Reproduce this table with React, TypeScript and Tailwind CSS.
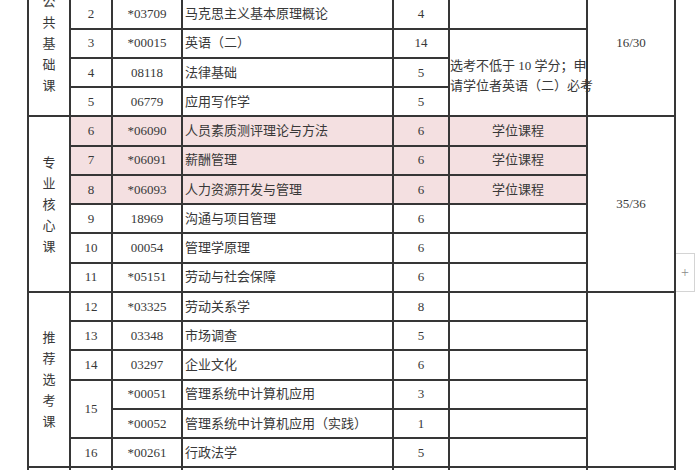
import React from 'react';

type Row = {
  seq?: string;
  seqSpan?: number;
  code: string;
  name: string;
  credit: string;
  note?: React.ReactNode;
  noteSpan?: number;
  skipNote?: boolean;
  skipSeq?: boolean;
  pink?: boolean;
  cat?: string;
  catSpan?: number;
  total?: string;
  totalSpan?: number;
};

// first row sits above the visible area, like a scrolled page
const rows: Row[] = [
  { seq: '', code: '', name: '', credit: '', note: '', cat: '公共基础课', catSpan: 5, total: '16/30', totalSpan: 5 },
  { seq: '2', code: '*03709', name: '马克思主义基本原理概论', credit: '4', note: '' },
  {
    seq: '3',
    code: '*00015',
    name: '英语（二）',
    credit: '14',
    note: (
      <div className="leading-[20px] pt-[8px]">
        选考不低于 10 学分；申
        <br />
        请学位者英语（二）必考
      </div>
    ),
    noteSpan: 3,
  },
  { seq: '4', code: '08118', name: '法律基础', credit: '5', skipNote: true },
  { seq: '5', code: '06779', name: '应用写作学', credit: '5', skipNote: true },
  { seq: '6', code: '*06090', name: '人员素质测评理论与方法', credit: '6', note: '学位课程', pink: true, cat: '专业核心课', catSpan: 6, total: '35/36', totalSpan: 6 },
  { seq: '7', code: '*06091', name: '薪酬管理', credit: '6', note: '学位课程', pink: true },
  { seq: '8', code: '*06093', name: '人力资源开发与管理', credit: '6', note: '学位课程', pink: true },
  { seq: '9', code: '18969', name: '沟通与项目管理', credit: '6', note: '' },
  { seq: '10', code: '00054', name: '管理学原理', credit: '6', note: '' },
  { seq: '11', code: '*05151', name: '劳动与社会保障', credit: '6', note: '' },
  { seq: '12', code: '*03325', name: '劳动关系学', credit: '8', note: '', cat: '推荐选考课', catSpan: 6, total: '', totalSpan: 6 },
  { seq: '13', code: '03348', name: '市场调查', credit: '5', note: '' },
  { seq: '14', code: '03297', name: '企业文化', credit: '6', note: '' },
  { seq: '15', seqSpan: 2, code: '*00051', name: '管理系统中计算机应用', credit: '3', note: '' },
  { skipSeq: true, code: '*00052', name: '管理系统中计算机应用（实践）', credit: '1', note: '' },
  { seq: '16', code: '*00261', name: '行政法学', credit: '5', note: '' },
  { seq: '', code: '', name: '', credit: '', note: '', cat: '', catSpan: 1, total: '', totalSpan: 1 },
];

const cell = 'border-2 border-[#363636] p-0';

const App: React.FC = () => {
  return (
    <div
      className="relative w-[700px] h-[470px] overflow-hidden bg-white text-[13px] text-[#383838]"
      style={{ fontFamily: '"Liberation Serif", "Noto Sans CJK SC", serif' }}
    >
      <div className="pl-[27px] -mt-[31px]">
        <table className="w-[647px] table-fixed border-collapse">
          <colgroup>
            <col className="w-[42px]" />
            <col className="w-[42px]" />
            <col className="w-[70px]" />
            <col className="w-[211px]" />
            <col className="w-[56px]" />
            <col className="w-[138px]" />
            <col className="w-[88px]" />
          </colgroup>
          <tbody>
            {rows.map((r, i) => {
              const bg = r.pink ? 'bg-[#f4e0e1]' : '';
              return (
                <tr key={i} className="h-[29.25px]">
                  {r.cat !== undefined && (
                    <td rowSpan={r.catSpan} className={`${cell} text-center align-middle`}>
                      <div className="flex flex-col items-center leading-[21px]">
                        {r.cat.split('').map((ch, k) => (
                          <span key={k}>{ch}</span>
                        ))}
                      </div>
                    </td>
                  )}
                  {!r.skipSeq && (
                    <td rowSpan={r.seqSpan} className={`${cell} ${bg} text-center`}>
                      {r.seq}
                    </td>
                  )}
                  <td className={`${cell} ${bg} text-center`}>{r.code}</td>
                  <td className={`${cell} ${bg} pl-[2px] whitespace-nowrap overflow-hidden`}>{r.name}</td>
                  <td className={`${cell} ${bg} text-center`}>{r.credit}</td>
                  {!r.skipNote && (
                    <td rowSpan={r.noteSpan} className={`${cell} ${bg} text-center whitespace-nowrap`}>
                      {r.note}
                    </td>
                  )}
                  {r.total !== undefined && (
                    <td rowSpan={r.totalSpan} className={`${cell} text-center`}>
                      {r.total}
                    </td>
                  )}
                </tr>
              );
            })}
          </tbody>
        </table>
      </div>
      <div className="absolute left-[676px] top-[253px] w-[19px] h-[39px] border border-l-0 border-[#d4d4d4] bg-white flex items-center justify-center text-[14px] text-[#8a8a8a]">
        +
      </div>
    </div>
  );
};

export default App;
